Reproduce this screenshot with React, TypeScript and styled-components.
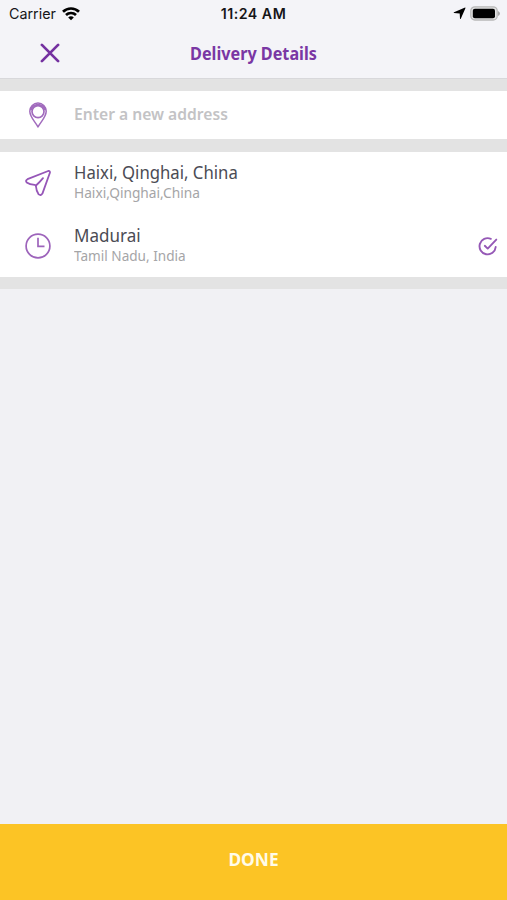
import React from 'react';
import styled, { createGlobalStyle } from 'styled-components';

const GlobalStyle = createGlobalStyle`
  *, *::before, *::after { box-sizing: border-box; }
  body { margin: 0; background: #f1f1f4; font-family: "Noto Sans", sans-serif; }
  svg { display: block; }
`;

const Screen = styled.div`
  display: flex;
  flex-direction: column;
  width: 100%;
  height: 100vh;
  overflow: hidden;
  background: #f1f1f4;
`;

const StatusBar = styled.div`
  display: grid;
  grid-template-columns: 1fr auto 1fr;
  align-items: center;
  height: 27px;
  padding: 0 7px 0 9px;
  font-family: Inter, sans-serif;
  font-size: 14.3px;
  line-height: 27px;
  color: #161618;
`;

const Carrier = styled.div`
  display: flex;
  align-items: center;
  gap: 6px;
`;

const Clock = styled.div`
  margin-right: 2px;
  font-weight: 600;
  font-size: 14.2px;
  letter-spacing: 0.5px;
`;

const StatusIcons = styled.div`
  display: flex;
  align-items: center;
  justify-content: flex-end;
  gap: 4px;
`;

const Header = styled.header`
  flex: none;
  height: 79px;
  background: #f4f4f8;
  border-bottom: 1px solid #d8d8db;
`;

const NavBar = styled.div`
  display: grid;
  grid-template-columns: 99px 1fr 99px;
  align-items: center;
  height: 51px;
`;

const CloseButton = styled.button`
  justify-self: center;
  padding: 0;
  border: 0;
  background: none;
`;

const Label = styled.span<{ $stretch: number; $center?: boolean }>`
  display: block;
  white-space: nowrap;
  transform: scaleX(${(p) => p.$stretch});
  transform-origin: ${(p) => (p.$center ? 'center' : 'left')};
`;

const Title = styled.h1`
  margin: 2px 0 0;
  text-align: center;
  font-size: 17px;
  line-height: 24px;
  font-weight: 700;
  color: #7a37a4;
`;

const Divider = styled.div<{ $height: number }>`
  flex: none;
  height: ${(p) => p.$height}px;
  background: #e3e3e3;
`;

const Panel = styled.section`
  flex: none;
  background: #fff;
`;

const Row = styled.div<{ $height: number }>`
  display: grid;
  grid-template-columns: 74px 1fr 39px;
  align-items: center;
  height: ${(p) => p.$height}px;
`;

const IconCell = styled.div`
  display: flex;
  justify-content: center;
  padding-left: 1px;
`;

const Placeholder = styled.div`
  padding-bottom: 2px;
  font-size: 16px;
  line-height: 24px;
  font-weight: 600;
  color: #c3c3c5;
`;

const PlaceText = styled.div`
  padding-bottom: 0.4px;
`;

const PlaceName = styled.div`
  margin-bottom: -1px;
  font-size: 17.3px;
  line-height: 22px;
  color: #4b4b54;
`;

const PlaceRegion = styled.div`
  font-size: 14px;
  line-height: 20px;
  color: #a5a5a7;
`;

const Spacer = styled.main`
  flex: 1;
`;

const DoneButton = styled.button`
  flex: none;
  height: 76px;
  padding: 0 0 6px;
  border: 0;
  background: #fcc425;
  color: #fffbea;
  font-family: "Noto Sans", sans-serif;
  font-size: 17.5px;
  line-height: 24px;
  font-weight: 700;
`;

const WifiIcon = () => (
  <svg width="18" height="14" viewBox="0 0 18 14" fill="none" stroke="#000" strokeWidth="2.7">
    <path d="M1 4.8C5.5.4 12.5.4 17 4.8" />
    <path d="M4 8C6.8 5.3 11.2 5.3 14 8" />
    <path d="M6.2 10.4C7.7 8.9 10.3 8.9 11.8 10.4L9 13.3Z" fill="#000" stroke="none" />
  </svg>
);

const LocationIcon = () => (
  <svg width="13" height="13" viewBox="0 0 13 13">
    <path d="M12.1.5Q12.7.5 12.4 1.2L7.8 11.8Q7.2 12.5 7 11.5L6.7 6.5 1 6.1Q.2 5.8 1 5.3Z" fill="#000" />
  </svg>
);

const BatteryIcon = () => (
  <svg width="30" height="15" viewBox="0 0 30 15">
    <rect x=".8" y=".8" width="26.4" height="13.2" rx="4" fill="#e3e3e3" stroke="#b8b8b8" strokeWidth="1.3" />
    <rect x="2.8" y="2.8" width="22.2" height="9.4" rx="2" fill="#000" />
    <path d="M28 5v5q2-1 2-2.5T28 5" fill="#a9a9a9" />
  </svg>
);

const CloseIcon = () => (
  <svg width="20" height="20" viewBox="0 0 20 20" fill="none" stroke="#7431a0" strokeWidth="2.7" strokeLinecap="round">
    <path d="M1.9 1.9 18.1 18.1M18.1 1.9 1.9 18.1" />
  </svg>
);

const PinIcon = () => (
  <svg width="20" height="26" viewBox="0 0 20 26" fill="none" stroke="#a16bbd" strokeLinejoin="round">
    <path d="M10 25C8 20.8 1.8 15.2 1.8 9.3a8.2 8.2 0 0 1 16.4 0C18.2 15.2 12 20.8 10 25Z" strokeWidth="1.5" />
    <circle cx="10" cy="9.6" r="6" strokeWidth="1.7" />
    <path d="M2.8 8A7.3 6.3 0 0 1 17.2 8" strokeWidth="2.2" />
  </svg>
);

const PlaneIcon = () => (
  <svg width="26" height="26" viewBox="0 0 26 26" fill="none" stroke="#9656b8" strokeWidth="1.8" strokeLinecap="round" strokeLinejoin="round">
    <path d="M23.2 1Q25.3.6 24.9 2.8L17.4 23.6Q15.8 26 13.7 24.4Q11.1 20.5 11 16.6Q10.9 15.1 9.7 14.9Q4.6 14.6 1.7 12.5Q.1 10.6 2.5 9.2Z" />
    <path d="M11 15.5Q14.8 12 18 8.1" />
  </svg>
);

const HistoryIcon = () => (
  <svg width="26" height="26" viewBox="0 0 26 26" fill="none" stroke="#9d64bb" strokeWidth="1.7">
    <circle cx="13" cy="13" r="11.9" />
    <path d="M13 4.8v8.6h6.5" />
  </svg>
);

const SelectedIcon = () => (
  <svg width="20" height="20" viewBox="0 0 20 20" fill="none" stroke="#9558b6" strokeWidth="1.9" strokeLinecap="round" strokeLinejoin="round">
    <path d="M12.8 2.8A8.1 8.1 0 1 0 17.7 11" />
    <path d="M6.8 9.8 9.7 12.6 18.3 3.6" />
  </svg>
);

type Place = {
  name: string;
  nameStretch: number;
  region: string;
  regionStretch: number;
  icon: React.ReactNode;
  selected: boolean;
};

const places: Place[] = [
  { name: 'Haixi, Qinghai, China', nameStretch: 0.967, region: 'Haixi,Qinghai,China', regionStretch: 0.98, icon: <PlaneIcon />, selected: false },
  { name: 'Madurai', nameStretch: 0.985, region: 'Tamil Nadu, India', regionStretch: 0.97, icon: <HistoryIcon />, selected: true },
];

export default function App() {
  return (
    <Screen>
      <GlobalStyle />
      <Header>
        <StatusBar>
          <Carrier>
            Carrier
            <WifiIcon />
          </Carrier>
          <Clock>11:24 AM</Clock>
          <StatusIcons>
            <LocationIcon />
            <BatteryIcon />
          </StatusIcons>
        </StatusBar>
        <NavBar>
          <CloseButton aria-label="Close"><CloseIcon /></CloseButton>
          <Title><Label $stretch={0.952} $center>Delivery Details</Label></Title>
        </NavBar>
      </Header>
      <Divider $height={12} />
      <Panel>
        <Row $height={48}>
          <IconCell><PinIcon /></IconCell>
          <Placeholder><Label $stretch={0.977}>Enter a new address</Label></Placeholder>
        </Row>
      </Panel>
      <Divider $height={12.5} />
      <Panel>
        {places.map((place) => (
          <Row key={place.name} $height={62.7}>
            <IconCell>{place.icon}</IconCell>
            <PlaceText>
              <PlaceName><Label $stretch={place.nameStretch}>{place.name}</Label></PlaceName>
              <PlaceRegion><Label $stretch={place.regionStretch}>{place.region}</Label></PlaceRegion>
            </PlaceText>
            {place.selected && <IconCell><SelectedIcon /></IconCell>}
          </Row>
        ))}
      </Panel>
      <Divider $height={12.5} />
      <Spacer />
      <DoneButton><Label $stretch={0.99} $center>DONE</Label></DoneButton>
    </Screen>
  );
}
